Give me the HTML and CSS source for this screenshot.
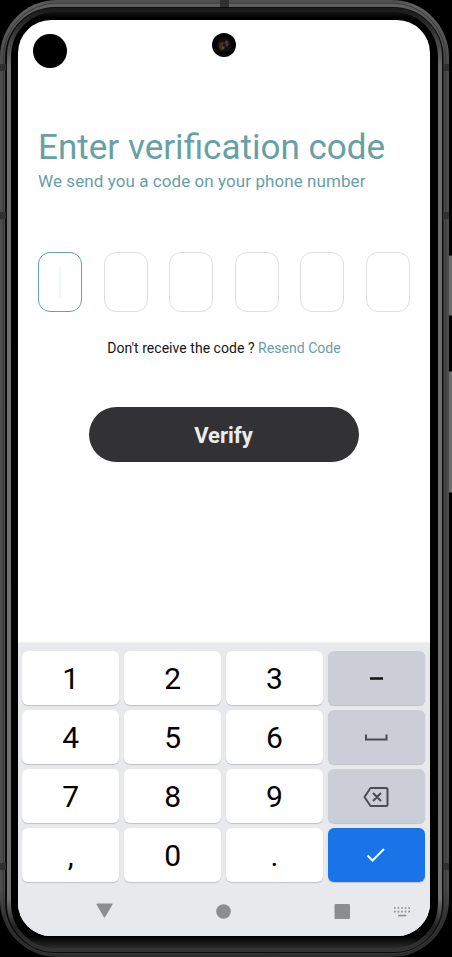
FILE: index.html
```html
<!DOCTYPE html>
<html lang="en">
<head>
<meta charset="utf-8">
<title>Enter verification code</title>
<link rel="stylesheet" href="styles.css">
</head>
<body>
<div class="phone">
  <svg class="frame" viewBox="0 0 452 957" fill="none" aria-hidden="true">
    <defs>
      <linearGradient id="rim" x1="0" y1="0" x2="0" y2="1">
        <stop offset="0" stop-color="#4c4c4c"/><stop offset=".005" stop-color="#606060"/><stop offset=".06" stop-color="#4c4c4c"/>
        <stop offset=".93" stop-color="#4c4c4c"/><stop offset=".96" stop-color="#303030"/><stop offset="1" stop-color="#2c2c2c"/>
      </linearGradient>
      <linearGradient id="shine" x1="0" y1="0" x2="0" y2="1">
        <stop offset="0" stop-color="#1c1c1c"/><stop offset=".02" stop-color="#303030"/><stop offset=".06" stop-color="#6c6c6c"/>
        <stop offset=".945" stop-color="#707070"/><stop offset=".975" stop-color="#222"/><stop offset="1" stop-color="#333"/>
      </linearGradient>
      <linearGradient id="glow" x1="0" y1="0" x2="0" y2="1">
        <stop offset="0" stop-color="#1c1c1c"/><stop offset=".008" stop-color="#000"/><stop offset=".985" stop-color="#000"/><stop offset="1" stop-color="#303030"/>
      </linearGradient>
    </defs>
    <rect x="448.500" y="255.500" width="8" height="60" fill="#6e6e6e" stroke="#333"/>
    <rect x="448.500" y="371.500" width="8" height="121" fill="#6e6e6e" stroke="#333"/>
    <rect x="0" y="0" width="449" height="957" rx="57" fill="url(#rim)"/>
    <rect x="3.300" y="3" width="442.400" height="951" rx="54" stroke="#383838" stroke-width="1"/>
    <rect x="5" y="7" width="438.500" height="946" rx="50" fill="#0c0c0c"/>
    <rect x="9" y="10" width="431" height="940" rx="46" fill="url(#glow)" stroke="url(#shine)" stroke-width="4"/>
    <path d="M0 64h6v7H0zM443 64h6v7h-6zM220 0h9v7h-9zM0 863h6v7H0zM443 863h6v7h-6zM271 953h9v4h-9zM0 212h6v7H0zM443 212h6v7h-6z" fill="#303030"/>
  </svg>
  <main class="screen">
    <div class="status-dot"></div>
    <svg class="camera" viewBox="0 0 24 24" aria-hidden="true">
      <circle cx="12" cy="12" r="12" fill="#050505"/>
      <circle cx="12" cy="12" r="7" fill="#15110f"/>
      <ellipse cx="10" cy="13" rx="3" ry="4" fill="#3a3023"/>
      <ellipse cx="14.500" cy="10.500" rx="2" ry="3" fill="#51304d"/>
      <circle cx="12.500" cy="12" r="1.500" fill="#171717"/>
      <circle cx="11" cy="15" r=".8" fill="#877344"/>
    </svg>
    <section class="content">
      <h1 class="title">Enter verification code</h1>
      <p class="subtitle">We send you a code on your phone number</p>
      <div class="code">
        <span class="cell active"><i class="caret"></i></span><span class="cell"></span><span class="cell"></span><span class="cell"></span><span class="cell"></span><span class="cell"></span>
      </div>
      <p class="resend">Don't receive the code ? <a>Resend Code</a></p>
      <button class="verify">Verify</button>
    </section>
    <section class="keyboard">
      <div class="keys">
        <span class="key">1</span><span class="key">2</span><span class="key">3</span>
        <span class="key alt"><svg width="28" height="28" viewBox="0 0 28 28"><path d="M8 13.500h13" stroke="#111" stroke-width="2.500"/></svg></span>
        <span class="key">4</span><span class="key">5</span><span class="key">6</span>
        <span class="key alt"><svg width="28" height="28" viewBox="0 0 28 28" fill="none"><path d="M4 10.500v5h20.500v-5" stroke="#4b4c50" stroke-width="2"/></svg></span>
        <span class="key">7</span><span class="key">8</span><span class="key">9</span>
        <span class="key alt"><svg width="28" height="28" viewBox="0 0 28 28" fill="none" stroke="#4b4c50" stroke-width="2" stroke-linejoin="round"><path d="M8.500 5H24a1.500 1.500 0 0 1 1.500 1.500v15A1.500 1.500 0 0 1 24 23H8.500L2.500 14zM11 10l8 8m0-8l-8 8"/></svg></span>
        <span class="key">,</span><span class="key">0</span><span class="key">.</span>
        <span class="key enter"><svg width="28" height="28" viewBox="0 0 28 28" fill="none"><path d="M5.500 13.500l5 5L22 7" stroke="#fff" stroke-width="2"/></svg></span>
      </div>
      <nav class="nav">
        <svg viewBox="0 0 412 54" fill="#8c8d90">
          <path d="M79 21.500h15q1 0 .5 1l-7.300 12.500q-.7 1-1.400 0l-7.300-12.500q-.5-1 .5-1z"/>
          <circle cx="205.500" cy="29.500" r="7.300"/>
          <rect x="316.500" y="22" width="15.500" height="15" rx="1"/>
          <path d="M376 26h16M376 29.700h16" stroke="#8c8d90" stroke-width="1.700" stroke-dasharray="1.700 1.870"/>
          <rect x="380" y="32.800" width="8.300" height="1.500"/>
        </svg>
      </nav>
    </section>
  </main>
</div>
</body>
</html>
```
FILE: styles.css
```css
* { box-sizing: border-box; }
body { margin: 0; background: #000; font-family: Roboto, sans-serif; overflow: hidden; }
.phone { position: relative; width: 452px; height: 957px; padding: 20px 22px 21px 18px; }
.frame { position: absolute; inset: 0; width: 452px; height: 957px; }
.screen { position: relative; width: 412px; height: 916px; display: flex; flex-direction: column; background: #fff; border-radius: 33px; overflow: hidden; }
.status-dot { position: absolute; left: 15px; top: 14px; width: 33.500px; height: 34px; border-radius: 50%; background: #000; }
.camera { position: absolute; left: 194px; top: 13px; width: 24px; height: 24px; }
.content { flex: 1; padding: 106px 20px 0; display: flex; flex-direction: column; }
.title { margin: 0; font-size: 35.050px; line-height: 42px; font-weight: 400; color: #67a0a5; white-space: nowrap; }
.subtitle { margin: 3px 0 0; font-size: 17px; line-height: 20px; letter-spacing: .075px; color: #67a0a5; white-space: nowrap; }
.code { display: flex; justify-content: space-between; margin-top: 61px; }
.cell { width: 44px; height: 60px; border: 1px solid #dedede; border-radius: 12px; display: flex; align-items: center; justify-content: center; }
.cell.active { border-color: #67a3a7; }
.caret { width: 2px; height: 30px; background: #f0f6f6; }
.resend { margin: 27px 0 0; text-align: center; font-size: 14px; line-height: 18px; letter-spacing: .04px; color: #151515; white-space: nowrap; }
.resend a { color: #67a0a5; }
.verify { margin: 49.600px auto 0; width: 270px; height: 55.400px; border: 0; border-radius: 28px; background: #323234; color: #ececee; font: 700 22px/56px Roboto, sans-serif; padding: 1px 0 0; position: relative; left: -.5px; }
.keyboard { height: 293px; background: #e8e9ed; box-shadow: 0 -1px 2px #ececec; padding: 8px 5px 0 4px; }
.keys { display: grid; grid-template-columns: repeat(4, 1fr); grid-auto-rows: 53.500px; gap: 5.500px 4.500px; }
.key { display: flex; align-items: center; justify-content: center; border-radius: 6px; background: #fff; box-shadow: 0 1px 1px #bfc0c4; padding-top: 2px; font-size: 30px; color: #000; }
.key.alt { background: #cbced6; }
.key.enter { background: #1b73e8; }
.nav { height: 54px; margin: 0 -5px 0 -4px; }
.nav svg { display: block; width: 412px; height: 54px; }
```
